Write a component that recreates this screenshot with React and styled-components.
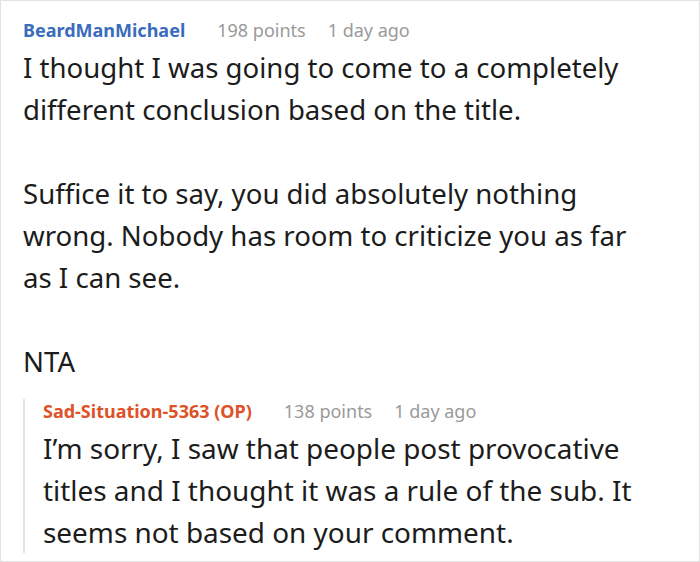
import React from 'react'
import styled, { createGlobalStyle } from 'styled-components'

const GlobalStyle = createGlobalStyle`
  html, body {
    margin: 0;
    padding: 0;
    background: #fff;
  }
  body {
    font-family: 'Noto Sans', 'Open Sans', sans-serif;
  }
`

const Frame = styled.div`
  box-sizing: border-box;
  width: 700px;
  height: 562px;
  overflow: hidden;
  border: 1px solid #e2e2e2;
  padding: 17px 56px 0 22px;
  background: #fff;
`

const Meta = styled.div`
  display: flex;
  align-items: baseline;
  gap: 22px;
  height: 24px;
  line-height: 24px;
  font-size: 18px;
  margin-bottom: 4px;
  margin-top: ${(p) => p.$lift || 0}px;
`

const Author = styled.span`
  font-weight: 700;
  margin-right: 10px;
  color: ${(p) => (p.$op ? '#dd5226' : '#3a6cbd')};
`

const Muted = styled.span`
  color: #9a9a9a;
`

const Body = styled.div`
  font-size: ${(p) => p.$size || 27.6}px;
  line-height: 42px;
  color: #1c1c1c;

  p {
    margin: 0 0 42px;
  }
  p:last-child {
    margin-bottom: 0;
  }
`

const Reply = styled.div`
  margin-top: 28px;
  border-left: 2px solid #e4e4e4;
  padding-left: 18px;
`

const Comment = ({ author, op, points, age, lift, size, paragraphs }) => (
  <div>
    <Meta $lift={lift}>
      <Author $op={op}>{author}</Author>
      <Muted>{points} points</Muted>
      <Muted>{age}</Muted>
    </Meta>
    <Body $size={size}>
      {paragraphs.map((t) => (
        <p key={t}>{t}</p>
      ))}
    </Body>
  </div>
)

export default function App() {
  return (
    <>
      <GlobalStyle />
      <Frame>
        <Comment
          author="BeardManMichael"
          points={198}
          age="1 day ago"
          paragraphs={[
            'I thought I was going to come to a completely different conclusion based on the title.',
            'Suffice it to say, you did absolutely nothing wrong. Nobody has room to criticize you as far as I can see.',
            'NTA',
          ]}
        />
        <Reply>
          <Comment
            author="Sad-Situation-5363 (OP)"
            op
            points={138}
            age="1 day ago"
            lift={-11}
            size={27.9}
            paragraphs={[
              'I’m sorry, I saw that people post provocative titles and I thought it was a rule of the sub. It seems not based on your comment.',
            ]}
          />
        </Reply>
      </Frame>
    </>
  )
}
